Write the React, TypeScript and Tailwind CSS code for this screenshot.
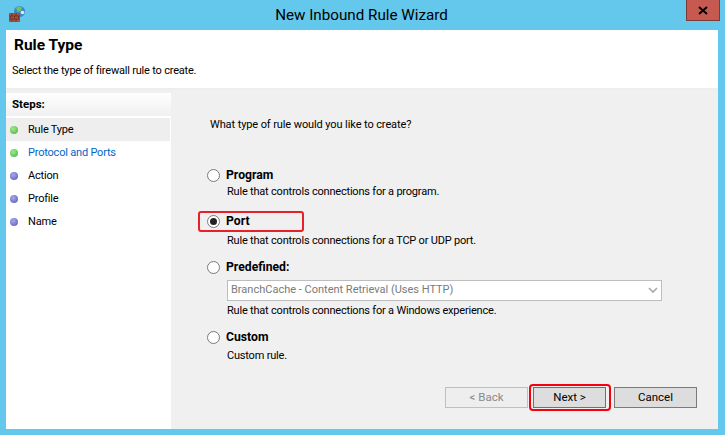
const font = "[font-family:Roboto,sans-serif]";

function FirewallIcon() {
  return (
    <svg width="16" height="16" viewBox="0 0 16 16" className="shrink-0">
      <circle cx="10.5" cy="5.5" r="5.5" fill="#3f86c9" />
      <path d="M7 2 Q10 -0.5 13 1.5 L12 5 L8.5 6 Z" fill="#6fc06a" />
      <circle cx="13.5" cy="6.5" r="1.8" fill="#d8ecf7" />
      <rect x="0" y="7" width="11" height="9" fill="#a5533c" />
      <path d="M0 10h11M0 13h11M3 7v3M7 7v3M1.5 10v3M5.5 10v3M9.5 10v3M3 13v3M7 13v3" stroke="#6d2f20" strokeWidth="0.8" />
    </svg>
  );
}

function Step({ label, done, active, link }: { label: string; done?: boolean; active?: boolean; link?: boolean }) {
  return (
    <div className={`mr-[1px] flex h-[23px] items-center ${active ? "bg-[#eeeeee]" : ""}`}>
      <span
        className={`ml-1 h-2 w-2 rounded-full ${
          done
            ? "bg-[radial-gradient(circle_at_40%_35%,#a5e88f,#3fb23a)]"
            : "bg-[radial-gradient(circle_at_40%_35%,#a9a9e8,#5656b8)]"
        }`}
      />
      <span className={`ml-[10px] pt-[2px] text-[11px] tracking-[-0.2px] ${link ? "text-[#0066cc]" : "text-black"}`}>{label}</span>
    </div>
  );
}

function Radio({ checked }: { checked?: boolean }) {
  return (
    <span className="flex h-[13px] w-[13px] shrink-0 items-center justify-center rounded-full border border-[#7a7a7a] bg-white">
      {checked && <span className="h-[7px] w-[7px] rounded-full bg-[#222222]" />}
    </span>
  );
}

function OptionLabel({ label, checked }: { label: string; checked?: boolean }) {
  return (
    <div className="flex h-[18px] items-center gap-[6px]">
      <Radio checked={checked} />
      <span className="text-[12.2px] font-bold text-black">{label}</span>
    </div>
  );
}

function Desc({ children, className = "" }: { children: React.ReactNode; className?: string }) {
  return <div className={`ml-[20px] h-[18px] text-[11px] leading-[18px] tracking-[-0.2px] text-black ${className}`}>{children}</div>;
}

export default function App() {
  return (
    <div className={`flex h-[435px] w-[725px] flex-col overflow-hidden bg-[#63c8ec] ${font}`}>
      <div className="relative flex h-[30px] shrink-0 items-center justify-center">
        <div className="absolute left-[9px] top-[6px]">
          <FirewallIcon />
        </div>
        <span className="-ml-[2px] text-[15.2px] text-black">New Inbound Rule Wizard</span>
        <div className="absolute right-[5px] top-0 flex h-[21px] w-[34px] items-center justify-center border border-t-0 border-[#7a3a35] bg-[#c75a50]">
          <svg width="10" height="9" viewBox="0 0 10 9">
            <path d="M1 1 L9 8 M9 1 L1 8" stroke="#000" strokeWidth="2" />
          </svg>
        </div>
      </div>

      <div className="mb-[6px] ml-[6px] mr-[7px] flex min-h-0 flex-1 flex-col bg-[#f0f0f0]">
        <div className="h-[60px] shrink-0 border-b-2 border-[#eeeeee] bg-white pl-[8px] pt-[5px]">
          <div className="text-[15.5px] font-bold leading-[20px] text-black">Rule Type</div>
          <div className="-ml-[2px] mt-[8px] text-[11px] leading-[16px] tracking-[-0.2px] text-black">Select the type of firewall rule to create.</div>
        </div>
        <div className="flex min-h-0 flex-1 pt-[3px]">
          <div className="w-[165px] shrink-0 bg-white">
            <div className="flex h-[23px] items-center bg-[linear-gradient(#ffffff,#f0f0f0)] pl-[6px] text-[11.5px] font-bold text-black">
              Steps:
            </div>
            <div className="mt-[2px]">
              <Step label="Rule Type" done active />
              <Step label="Protocol and Ports" done link />
              <Step label="Action" />
              <Step label="Profile" />
              <Step label="Name" />
            </div>
          </div>
          <div className="ml-[2px] flex min-w-0 flex-1 flex-col">
            <div className="pl-[37px] pt-[24px] text-[11px] leading-[16px] tracking-[-0.1px] text-black">What type of rule would you like to create?</div>
            <div className="ml-[34px] mt-[33px] flex w-[455px] flex-col">
              <OptionLabel label="Program" />
              <Desc className="-mt-[1px]">Rule that controls connections for a program.</Desc>
              <div className="relative mt-[11px]">
                <OptionLabel label="Port" checked />
                <div className="absolute left-[-9px] top-[-1px] h-[21px] w-[106px] rounded-[3px] border-2 border-[#e8202a]" />
              </div>
              <Desc className="mt-[2px]">Rule that controls connections for a TCP or UDP port.</Desc>
              <div className="mt-[8px]">
                <OptionLabel label="Predefined:" />
              </div>
              <div className="ml-[20px] mt-[4px] flex h-[21px] items-center justify-between border border-[#bdbdbd] bg-white pl-[3px] pr-[3px] text-[11px] text-[#7a7a7a]">
                <span>BranchCache - Content Retrieval (Uses HTTP)</span>
                <svg width="10" height="7" viewBox="0 0 10 7">
                  <path d="M1 1 L5 5 L9 1" fill="none" stroke="#a8a8a8" strokeWidth="1.6" />
                </svg>
              </div>
              <Desc className="mt-[1px]">Rule that controls connections for a Windows experience.</Desc>
              <div className="mt-[8px]">
                <OptionLabel label="Custom" />
              </div>
              <Desc className="mt-[1px]">Custom rule.</Desc>
            </div>
            <div className="mb-[18px] mr-[21px] mt-auto flex items-center justify-end">
              <button className="h-[21px] w-[83px] border border-[#bfbfbf] bg-[#eeeeee] text-[11.5px] text-[#8a8a8a]">&lt; Back</button>
              <div className="ml-[1px] mr-[3px] rounded-[4px] border-2 border-[#f5000f] py-[1px] pl-[2px] pr-[3px]">
                <button className="block h-[21px] w-[73px] border border-[#3f7eb0] bg-[#dddddd] text-[11.5px] text-black">Next &gt;</button>
              </div>
              <button className="h-[21px] w-[83px] border border-[#7a7a7a] bg-[#dddddd] text-[11.5px] text-black">Cancel</button>
            </div>
          </div>
        </div>
      </div>
    </div>
  );
}
